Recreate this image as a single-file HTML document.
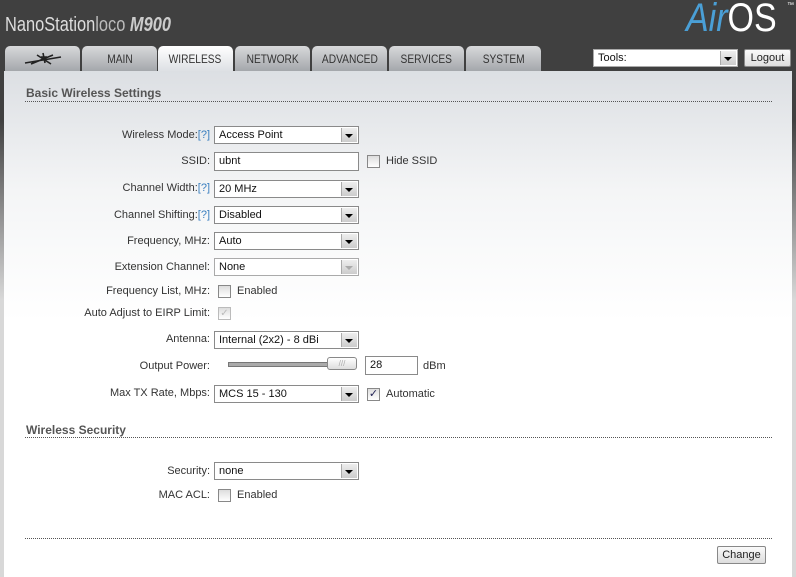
<!DOCTYPE html>
<html><head><meta charset="utf-8"><style>
*{margin:0;padding:0;box-sizing:border-box}
body{width:796px;height:577px;overflow:hidden;background:linear-gradient(#404040 0,#404040 120px,#d8d8d8 300px,#d8d8d8);font-family:"Liberation Sans",sans-serif;font-size:11px;color:#333;position:relative}
.abs{position:absolute}
#hdr{left:0;top:0;width:796px;height:71px;background:#404040}
.brand{left:5px;top:14px;color:#ddd;font-size:20px;transform:scaleX(0.82);transform-origin:left;white-space:nowrap}
.tab{top:46px;height:25px;width:75px;border-radius:5px 5px 0 0;background:linear-gradient(#d8d9db,#a4a7ab);color:#333;font-size:12px;text-align:center;line-height:27px}
.tab span{display:inline-block;transform:scaleX(0.85)}
.tab.act{height:26px;background:linear-gradient(#fff,#dcdfe3)}
#panel{left:4px;top:71px;width:788px;height:506px;background:linear-gradient(#dcdfe3 0,#f4f5f6 120px,#fff 250px,#fff)}
.h{font-size:12px;font-weight:bold;color:#555}
.line{left:25px;width:747px;border-top:1px dotted #555;height:0}
.lbl{width:200px;left:10px;text-align:right;color:#333}
.sel,.inp{left:214px;width:145px;height:18px;border:1px solid #8a8a8a;background:#fff;padding:2px 4px;font-size:11px;color:#111}
.sel:after{content:"";position:absolute;right:1px;top:1px;width:15px;height:14px;background:linear-gradient(#eee,#ccc);border-left:1px solid #aaa}
.sel i{position:absolute;right:5px;top:7px;width:0;height:0;border:4px solid transparent;border-top:4px solid #000;border-bottom:0;z-index:2}
.cb{width:13px;height:13px;border:1px solid #888;background:linear-gradient(#ddd,#fff)}
.help{color:#3a7fc0}
.btn{border:1px solid #888;border-radius:2px;background:linear-gradient(#fafafa,#ddd);text-align:center;color:#222}
</style></head><body>
<div id="hdr" class="abs"></div>
<div class="abs brand">NanoStation<span style="font-weight:100;color:#bbb">loco</span> <b style="font-style:italic;color:#ccc">M900</b></div>
<div class="abs" style="left:686px;top:-4px;font-size:40px;color:#fff;white-space:nowrap;transform:scaleX(0.85);transform-origin:left"><span style="color:#4a9fd6;font-style:italic">Air</span>OS</div>
<div class="abs" style="left:787px;top:2px;font-size:7px;color:#fff">™</div>
<div class="abs tab" style="left:5px"><svg width="40" height="14" viewBox="0 0 40 14" style="margin-top:6px"><path d="M2 11 L38 5 M8 12 L30 3 M20 1 L22 11 M14 3 L28 12 M18 5 L24 5" stroke="#222" stroke-width="1.6"/></svg></div>
<div class="abs tab" style="left:82px"><span>MAIN</span></div>
<div class="abs tab act" style="left:158px"><span>WIRELESS</span></div>
<div class="abs tab" style="left:235px"><span>NETWORK</span></div>
<div class="abs tab" style="left:312px"><span>ADVANCED</span></div>
<div class="abs tab" style="left:389px"><span>SERVICES</span></div>
<div class="abs tab" style="left:466px"><span>SYSTEM</span></div>
<div class="abs sel" style="left:593px;top:49px;width:145px;height:18px;border-color:#aaa">Tools:<i></i></div>
<div class="abs btn" style="left:744px;top:49px;width:47px;height:18px;line-height:16px;font-size:11px">Logout</div>
<div id="panel" class="abs"></div>
<div class="abs h" style="left:26px;top:86px">Basic Wireless Settings</div>
<div class="abs line" style="top:101px"></div>

<div class="abs lbl" style="top:129px">Wireless Mode:<span class="help">[?]</span></div>
<div class="abs sel" style="top:126px">Access Point<i></i></div>
<div class="abs lbl" style="top:155px">SSID:</div>
<div class="abs inp" style="top:152px;height:19px">ubnt</div>
<div class="abs cb" style="left:367px;top:155px"></div>
<div class="abs" style="left:386px;top:155px">Hide SSID</div>
<div class="abs lbl" style="top:182px">Channel Width:<span class="help">[?]</span></div>
<div class="abs sel" style="top:180px">20 MHz<i></i></div>
<div class="abs lbl" style="top:209px">Channel Shifting:<span class="help">[?]</span></div>
<div class="abs sel" style="top:206px">Disabled<i></i></div>
<div class="abs lbl" style="top:235px">Frequency, MHz:</div>
<div class="abs sel" style="top:232px">Auto<i></i></div>
<div class="abs lbl" style="top:261px">Extension Channel:</div>
<div class="abs sel" style="top:258px;border-color:#aaa">None<i style="border-top-color:#aaa"></i></div>
<div class="abs lbl" style="top:285px">Frequency List, MHz:</div>
<div class="abs cb" style="left:218px;top:285px"></div>
<div class="abs" style="left:237px;top:285px">Enabled</div>
<div class="abs lbl" style="top:307px">Auto Adjust to EIRP Limit:</div>
<div class="abs cb" style="left:218px;top:307px;border-color:#bbb;color:#bbb;font-size:10px;line-height:11px;text-align:center">✓</div>
<div class="abs lbl" style="top:333px">Antenna:</div>
<div class="abs sel" style="top:331px">Internal (2x2) - 8 dBi<i></i></div>
<div class="abs lbl" style="top:360px">Output Power:</div>
<div class="abs" style="left:228px;top:362px;width:100px;height:5px;background:#aaa;border:1px solid #777"></div>
<div class="abs" style="left:327px;top:357px;width:30px;height:13px;border:1px solid #888;border-radius:3px;background:linear-gradient(#fff,#ddd);font-size:8px;color:#aaa;text-align:center;line-height:11px">///</div>
<div class="abs inp" style="left:365px;top:356px;width:53px;height:19px">28</div>
<div class="abs" style="left:423px;top:360px">dBm</div>
<div class="abs lbl" style="top:387px">Max TX Rate, Mbps:</div>
<div class="abs sel" style="top:385px">MCS 15 - 130<i></i></div>
<div class="abs cb" style="left:367px;top:388px;color:#225;font-size:11px;line-height:11px;text-align:center">✓</div>
<div class="abs" style="left:386px;top:388px">Automatic</div>

<div class="abs h" style="left:26px;top:423px">Wireless Security</div>
<div class="abs line" style="top:437px"></div>
<div class="abs lbl" style="top:465px">Security:</div>
<div class="abs sel" style="top:462px">none<i></i></div>
<div class="abs lbl" style="top:489px">MAC ACL:</div>
<div class="abs cb" style="left:218px;top:489px"></div>
<div class="abs" style="left:237px;top:489px">Enabled</div>
<div class="abs line" style="top:538px"></div>
<div class="abs btn" style="left:717px;top:546px;width:49px;height:18px;line-height:16px">Change</div>
</body></html>
